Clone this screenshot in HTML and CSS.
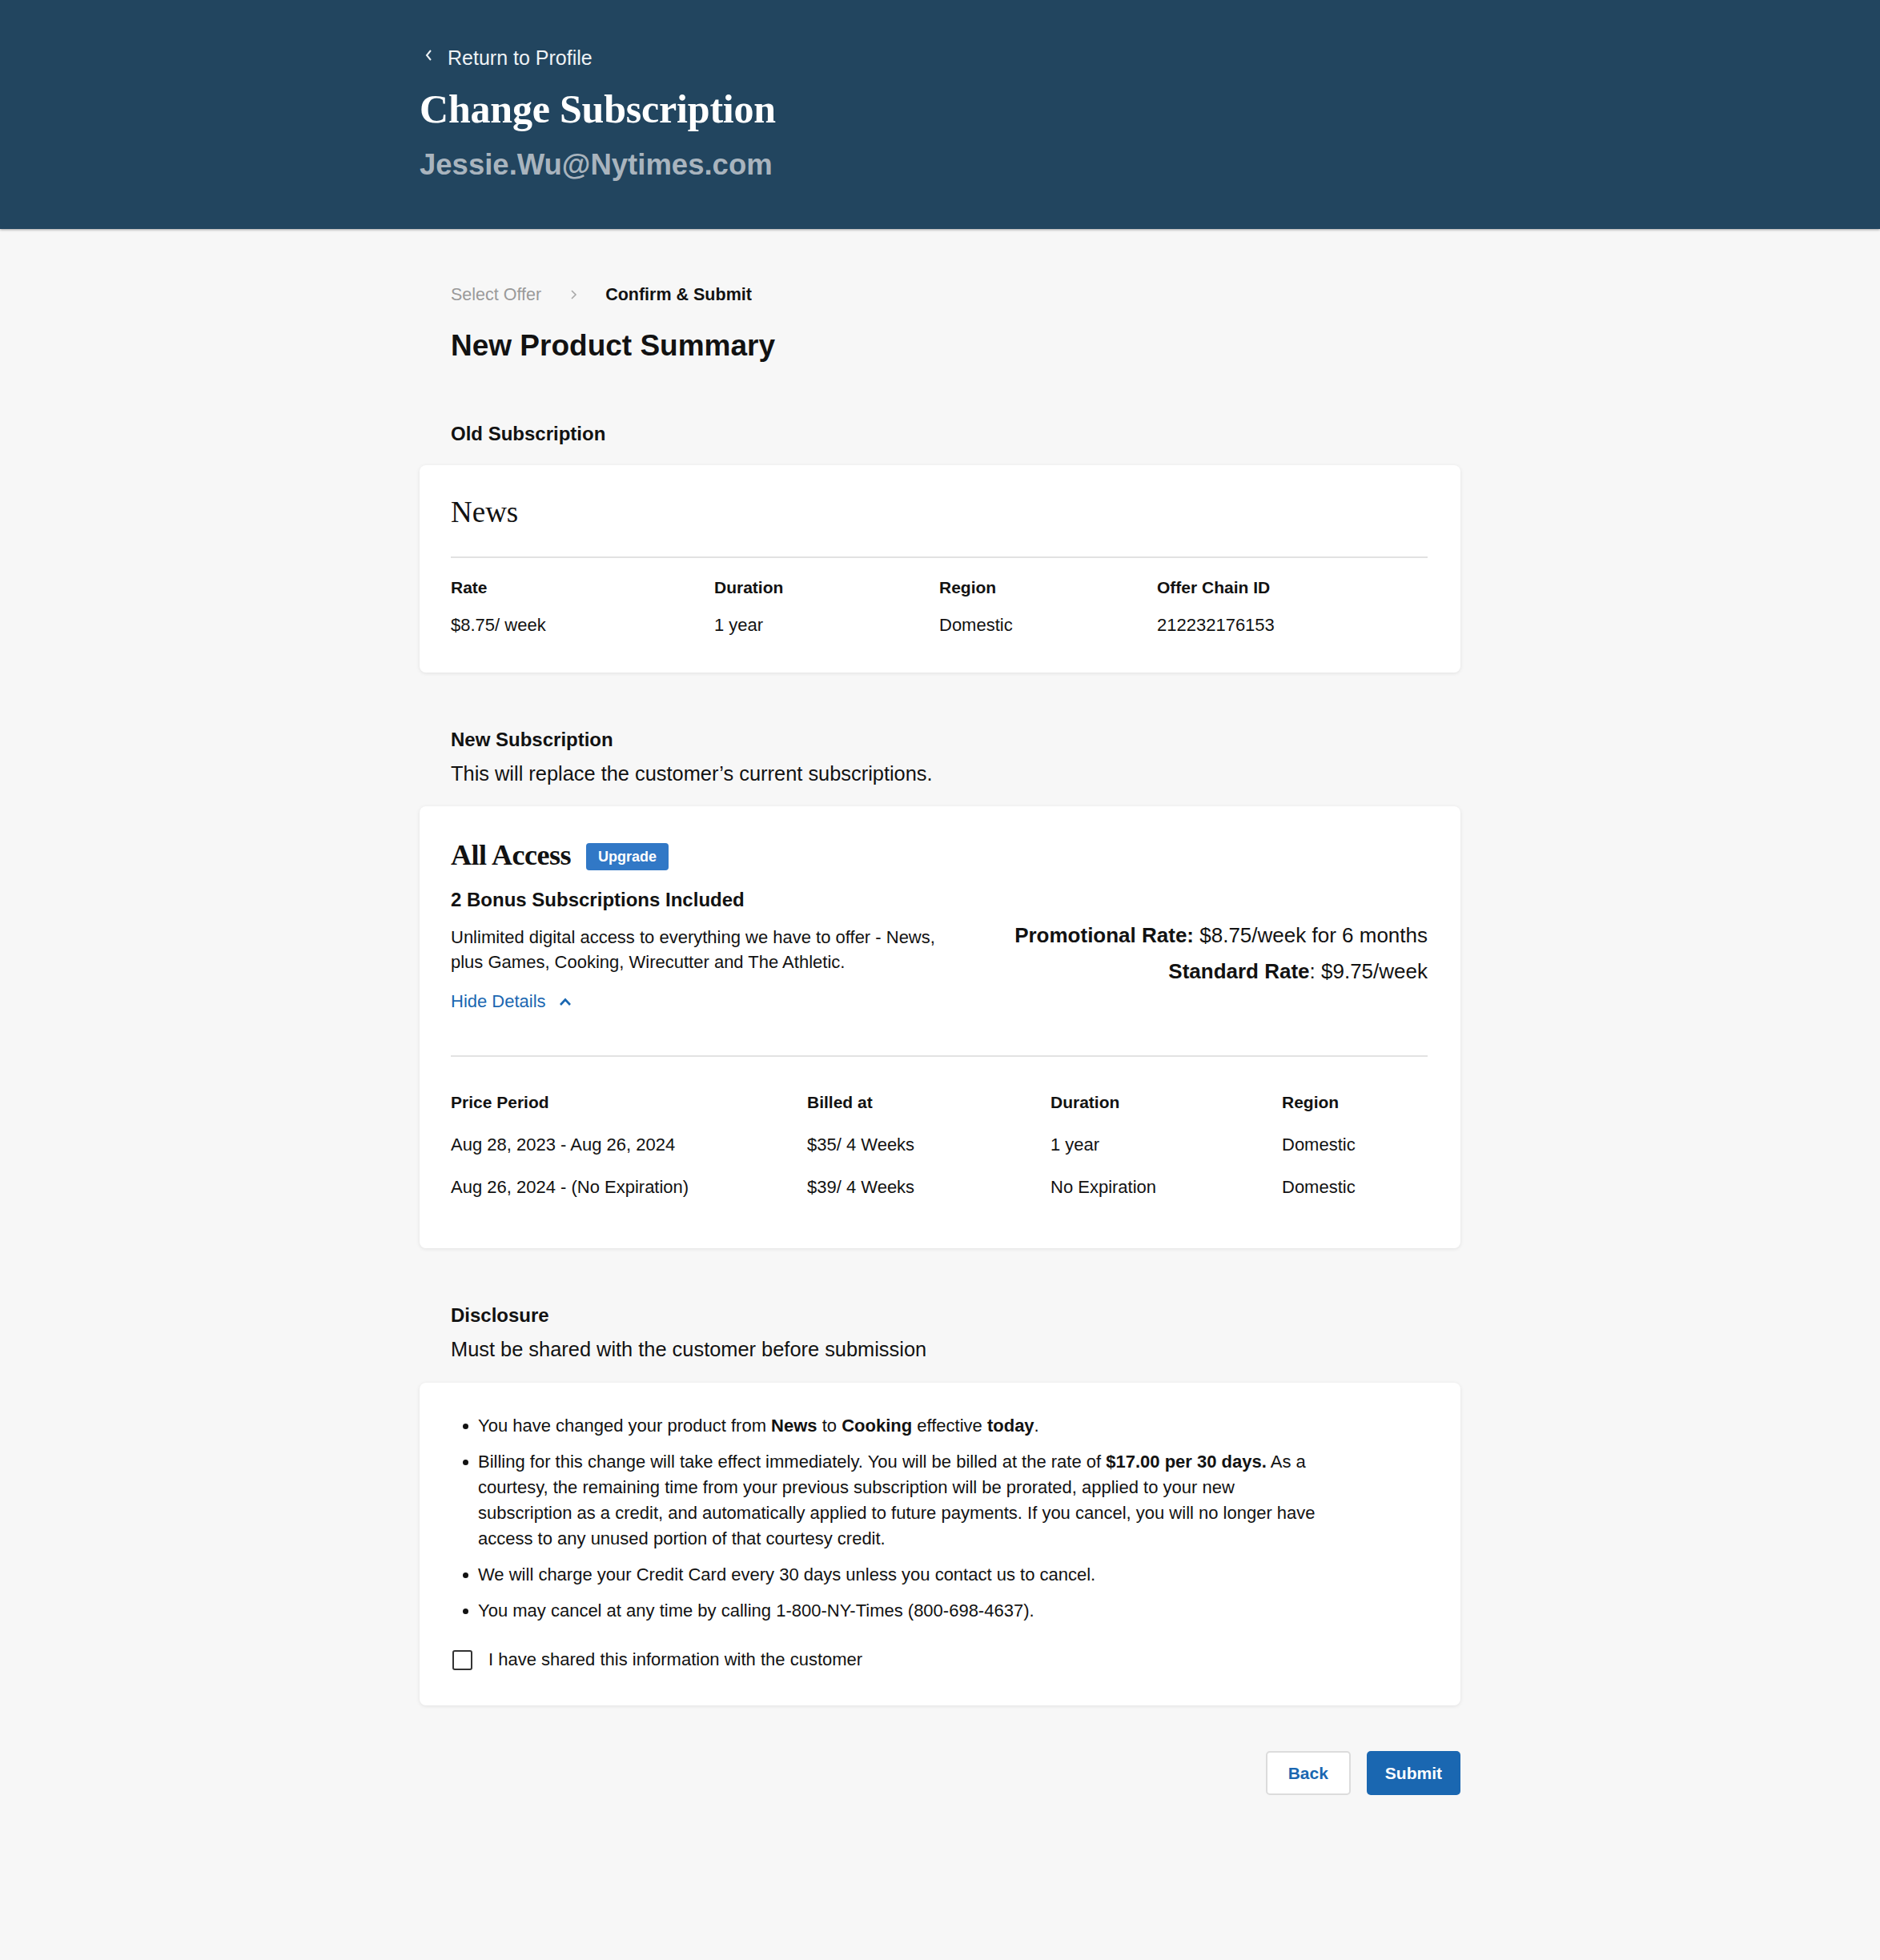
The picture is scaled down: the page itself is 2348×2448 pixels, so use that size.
FILE: index.html
```html
<!DOCTYPE html>
<html lang="en">
<head>
    <meta charset="UTF-8">
    <meta name="viewport" content="width=device-width, initial-scale=1.0">
    <title>Change Subscription</title>
    <link rel="stylesheet" href="styles.css">
</head>
<body>
    <header class="page-header">
        <div class="wrap">
            <a class="back-link" href="#">
                <svg class="back-icon" width="10" height="16" viewBox="0 0 10 16" aria-hidden="true">
                    <polyline points="7,2 2,8 7,14" fill="none" stroke="currentColor" stroke-width="2" />
                </svg>
                Return to Profile
            </a>
            <h1 class="page-title">Change Subscription</h1>
            <div class="account-email">Jessie.Wu@Nytimes.com</div>
        </div>
    </header>

    <main class="wrap content">
        <nav class="steps">
            <span class="step">Select Offer</span>
            <svg class="step-arrow" width="10" height="16" viewBox="0 0 10 16" aria-hidden="true">
                <polyline points="3,3 8,8 3,13" fill="none" stroke="currentColor" stroke-width="1.6" />
            </svg>
            <span class="step current">Confirm &amp; Submit</span>
        </nav>

        <h2 class="summary-title">New Product Summary</h2>

        <!-- Current product -->
        <section class="block old-block">
            <h3 class="section-title">Old Subscription</h3>
            <div class="card old-card">
                <h4 class="product-name">News</h4>
                <div class="info-grid old-grid">
                    <div class="label">Rate</div>
                    <div class="label">Duration</div>
                    <div class="label">Region</div>
                    <div class="label">Offer Chain ID</div>
                    <div class="value">$8.75/ week</div>
                    <div class="value">1 year</div>
                    <div class="value">Domestic</div>
                    <div class="value">212232176153</div>
                </div>
            </div>
        </section>

        <!-- Replacement product -->
        <section class="block">
            <h3 class="section-title">New Subscription</h3>
            <p class="section-note">This will replace the customer’s current subscriptions.</p>
            <div class="card new-card">
                <div class="product-head">
                    <h4 class="product-name strong">All Access</h4>
                    <span class="badge">Upgrade</span>
                </div>
                <div class="offer-row">
                    <div class="offer-info">
                        <div class="bonus">2 Bonus Subscriptions Included</div>
                        <p class="offer-desc">Unlimited digital access to everything we have to offer - News,<br>plus Games, Cooking, Wirecutter and The Athletic.</p>
                        <a class="toggle-link" href="#">Hide Details
                            <svg width="16" height="12" viewBox="0 0 16 12" aria-hidden="true">
                                <polyline points="2,10 8,3.5 14,10" fill="none" stroke="currentColor" stroke-width="2.6" />
                            </svg>
                        </a>
                    </div>
                    <div class="rates">
                        <div><b>Promotional Rate:</b> $8.75/week for 6 months</div>
                        <div><b>Standard Rate</b>: $9.75/week</div>
                    </div>
                </div>
                <div class="info-grid price-grid">
                    <div class="label">Price Period</div>
                    <div class="label">Billed at</div>
                    <div class="label">Duration</div>
                    <div class="label">Region</div>
                    <div class="value">Aug 28, 2023 - Aug 26, 2024</div>
                    <div class="value">$35/ 4 Weeks</div>
                    <div class="value">1 year</div>
                    <div class="value">Domestic</div>
                    <div class="value">Aug 26, 2024 - (No Expiration)</div>
                    <div class="value">$39/ 4 Weeks</div>
                    <div class="value">No Expiration</div>
                    <div class="value">Domestic</div>
                </div>
            </div>
        </section>

        <!-- Disclosure to read out before submitting -->
        <section class="block">
            <h3 class="section-title">Disclosure</h3>
            <p class="section-note">Must be shared with the customer before submission</p>
            <div class="card disclosure-card">
                <ul class="terms">
                    <li><span>You have changed your product from <b>News</b> to <b>Cooking</b> effective <b>today</b>.</span></li>
                    <li><span>Billing for this change will take effect immediately. You will be billed at the rate of <b>$17.00 per 30 days.</b> As a courtesy, the remaining time from your previous subscription will be prorated, applied to your new subscription as a credit, and automatically applied to future payments. If you cancel, you will no longer have access to any unused portion of that courtesy credit.</span></li>
                    <li><span>We will charge your Credit Card every 30 days unless you contact us to cancel.</span></li>
                    <li><span>You may cancel at any time by calling 1-800-NY-Times (800-698-4637).</span></li>
                </ul>
                <label class="confirm">
                    <input type="checkbox">
                    <span class="box"></span>
                    I have shared this information with the customer
                </label>
            </div>
        </section>

        <div class="actions">
            <button class="btn btn-secondary">Back</button>
            <button class="btn btn-primary">Submit</button>
        </div>
    </main>
</body>
</html>
```

FILE: styles.css
```css
:root {
    --page-bg: #f7f7f7;
    --header-bg: #22455f;
    --text-color: #121212;
    --muted: #9a9a9a;
    --blue: #1a67b1;
    --badge-blue: #3178c6;
    --line: #e2e2e2;
    --sans: "Liberation Sans", Arial, sans-serif;
    --serif: "Liberation Serif", "Times New Roman", serif;
}

body {
    margin: 0;
    min-height: 100vh;
    background: var(--page-bg);
    color: var(--text-color);
    font-family: var(--sans);
    font-size: 22px;
}

h1, h2, h3, h4, p, ul {
    margin: 0;
}

.wrap {
    width: 1300px;
    margin: 0 auto;
}

/* Header band */
.page-header {
    height: 286px;
    box-sizing: border-box;
    padding-top: 54px;
    background: var(--header-bg);
    box-shadow: 0 1px 3px rgba(0, 0, 0, 0.35);
}
.back-link {
    display: flex;
    align-items: center;
    gap: 18px;
    height: 36px;
    padding-left: 7px;
    color: #eef2f5;
    font-size: 25px;
    text-decoration: none;
}
.back-icon {
    margin-top: -6px;
}
.page-title {
    margin-top: 16px;
    color: #fff;
    font-family: var(--serif);
    font-size: 50px;
    font-weight: 700;
    line-height: 60px;
    letter-spacing: -0.2px;
}
.account-email {
    margin-top: 18px;
    color: #a9b4be;
    font-size: 36.5px;
    font-weight: 700;
    line-height: 44px;
}

/* Main column */
.content {
    padding: 67px 0 120px;
}
.steps {
    display: flex;
    align-items: center;
    gap: 35px;
    padding-left: 39px;
    font-size: 21.5px;
    line-height: 30px;
}
.step {
    color: var(--muted);
}
.step.current {
    color: var(--text-color);
    font-weight: 700;
}
.step-arrow {
    color: #a8a8a8;
}
.summary-title {
    margin-top: 27px;
    padding-left: 39px;
    font-size: 37px;
    line-height: 44px;
}

.block {
    margin-top: 68px;
}
.old-block {
    margin-top: 72px;
}
.section-title {
    padding-left: 39px;
    font-size: 24px;
    line-height: 32px;
}
.section-note {
    margin-top: 9px;
    padding-left: 39px;
    font-size: 25.4px;
    line-height: 34px;
}

.card {
    margin-top: 24px;
    padding: 37px 41px 44px 39px;
    background: #fff;
    border-radius: 8px;
    box-shadow: 0 1px 5px rgba(0, 0, 0, 0.09);
}
.old-card {
    margin-top: 23px;
}

.product-name {
    font-family: var(--serif);
    font-size: 37px;
    font-weight: 400;
    line-height: 44px;
}
.product-name.strong {
    font-size: 36px;
    font-weight: 700;
    letter-spacing: -0.5px;
}

.info-grid {
    display: grid;
    line-height: 30px;
}
.label {
    font-size: 21px;
    font-weight: 700;
}
.old-grid {
    grid-template-columns: 329px 281px 272px 1fr;
    row-gap: 17px;
    margin-top: 33px;
    padding-top: 22px;
    border-top: 2px solid var(--line);
}

/* New subscription card */
.new-card {
    padding-top: 39px;
    padding-bottom: 61px;
}
.product-head {
    display: flex;
    align-items: center;
    gap: 19px;
}
.badge {
    margin-top: 4px;
    padding: 0 15px;
    height: 34px;
    line-height: 34px;
    border-radius: 4px;
    background: var(--badge-blue);
    color: #fff;
    font-size: 18px;
    font-weight: 700;
}
.offer-row {
    display: flex;
    justify-content: space-between;
    align-items: center;
    margin-top: 18px;
}
.bonus {
    font-size: 24px;
    font-weight: 700;
    line-height: 32px;
}
.offer-desc {
    margin-top: 15px;
    line-height: 31px;
}
.toggle-link {
    display: inline-flex;
    align-items: center;
    gap: 16px;
    margin-top: 19px;
    color: var(--blue);
    line-height: 30px;
    text-decoration: none;
}
.rates {
    text-align: right;
    font-size: 26px;
    line-height: 45px;
    margin-top: 8px;
}
.price-grid {
    grid-template-columns: 445px 304px 289px 1fr;
    row-gap: 23px;
    margin-top: 52px;
    padding-top: 42px;
    border-top: 2px solid var(--line);
}

/* Disclosure */
.disclosure-card {
    margin-top: 25px;
    padding-top: 38px;
    padding-bottom: 42px;
}
.terms {
    padding: 0;
    list-style: none;
    line-height: 32px;
}
.terms li {
    display: flex;
    align-items: flex-start;
}
.terms li + li {
    margin-top: 13px;
}
.terms li::before {
    content: "";
    flex: none;
    width: 7px;
    height: 7px;
    margin: 13px 12px 0 15px;
    border-radius: 50%;
    background: var(--text-color);
}
.terms span {
    max-width: 1055px;
}
.confirm {
    display: flex;
    align-items: center;
    gap: 20px;
    margin-top: 30px;
    line-height: 30px;
}
.confirm input {
    display: none;
}
.confirm .box {
    width: 21px;
    height: 21px;
    margin-left: 2px;
    border: 2px solid #333;
    border-radius: 3px;
}

/* Buttons */
.actions {
    display: flex;
    justify-content: flex-end;
    gap: 20px;
    margin-top: 57px;
}
.btn {
    height: 55px;
    padding: 0 26px;
    border-radius: 5px;
    font-family: var(--sans);
    font-size: 21px;
    font-weight: 700;
    cursor: pointer;
}
.btn-secondary {
    background: #fff;
    color: var(--blue);
    border: 2px solid #dcdcdc;
}
.btn-primary {
    background: var(--blue);
    color: #fff;
    border: none;
    padding: 0 23px;
}
```
